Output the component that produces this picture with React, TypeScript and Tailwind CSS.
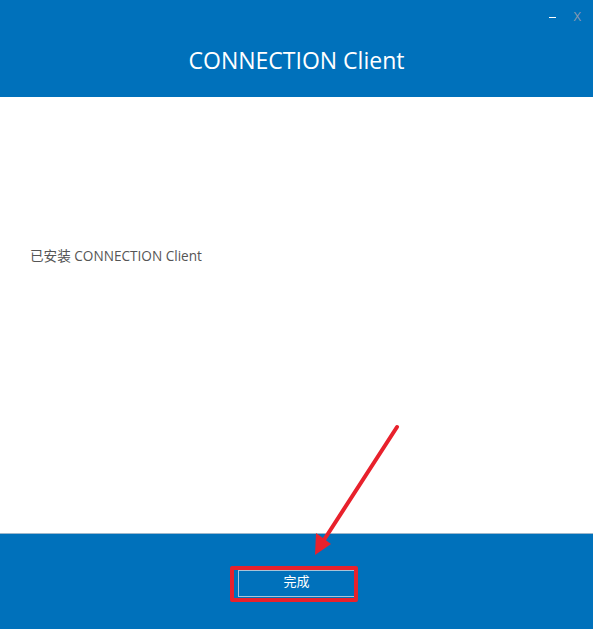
export default function App() {
  const font = { fontFamily: '"Open Sans", "Noto Sans CJK SC", sans-serif' };
  return (
    <div className="relative w-[593px] h-[629px] bg-white flex flex-col overflow-hidden" style={font}>
      {/* header */}
      <div className="relative h-[97px] bg-[#0071bb] flex justify-center pt-[47px] shrink-0">
        <span className="text-white text-[23px] leading-[26px]">CONNECTION Client</span>
        <div className="absolute top-[10px] right-[12px] flex items-center gap-[17px]">
          <span className="block w-[7px] h-[1px] bg-white mt-[2px]" />
          <span className="text-[#8a9bb0] text-[13px] leading-none">X</span>
        </div>
      </div>
      {/* body */}
      <div className="h-[436px] flex items-start px-[30px] pt-[149px] shrink-0">
        <span className="text-[#555] text-[13.6px] leading-[20px]">已安装 CONNECTION Client</span>
      </div>
      {/* footer */}
      <div className="flex-1 bg-[#0071bb] border-t border-[#9cb7cc] flex justify-center pt-[36px]">
        <div className="relative">
          <button className="w-[118px] h-[27px] border border-[#a9c3d8] text-white text-[13px] leading-none flex items-center justify-center pb-[4px]">
            完成
          </button>
          <div className="absolute -left-[8px] -top-[4px] w-[128px] h-[36px] border-[4px] border-[#e8212c] rounded-[2px]" />
        </div>
      </div>
      {/* annotation arrow */}
      <svg className="absolute left-0 top-0 pointer-events-none" width="593" height="629">
        <line x1="397" y1="427" x2="322" y2="543" stroke="#e8212c" strokeWidth="4" strokeLinecap="round" />
        <polygon points="315,555 316,533 331,544" fill="#e8212c" />
      </svg>
    </div>
  );
}
